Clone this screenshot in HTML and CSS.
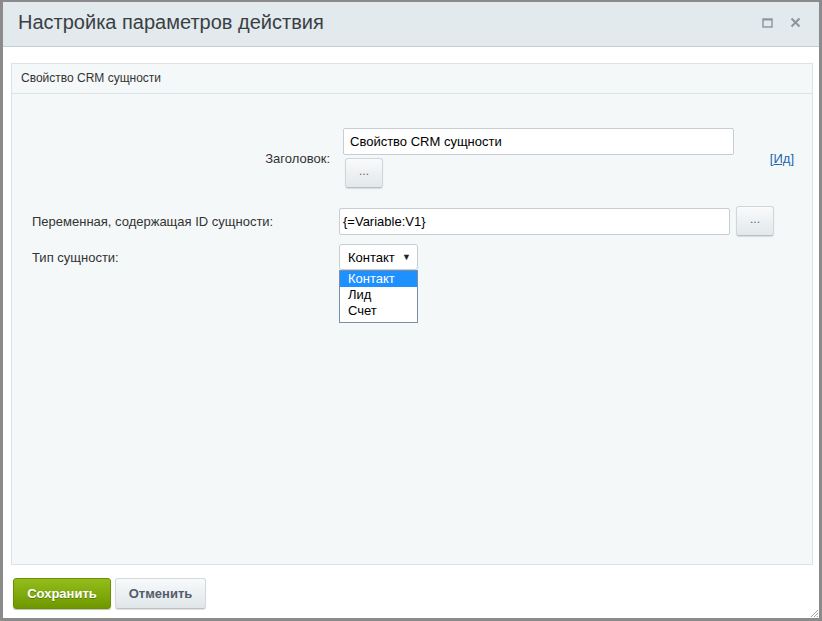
FILE: index.html
```html
<!DOCTYPE html>
<html lang="ru">
<head>
    <meta charset="UTF-8">
    <title>Настройка параметров действия</title>
    <link rel="stylesheet" href="styles.css">
</head>
<body>
    <div class="dialog">
        <div class="dialog-head">
            <span class="dialog-title">Настройка параметров действия</span>
            <span class="head-icons">
                <svg width="11" height="10" viewBox="0 0 11 10"><rect x="1" y="1" width="9" height="8" fill="none" stroke="#8a949c" stroke-width="1.4"/><line x1="1" y1="1.8" x2="10" y2="1.8" stroke="#8a949c" stroke-width="1.4"/></svg>
                <svg width="11" height="11" viewBox="0 0 11 11"><path d="M1.5 1.5 L9.5 9.5 M9.5 1.5 L1.5 9.5" stroke="#8a949c" stroke-width="2"/></svg>
            </span>
        </div>

        <div class="dialog-body">
            <div class="panel">
                <div class="panel-title">Свойство CRM сущности</div>
                <div class="panel-content">
                    <div class="row-title">
                        <div class="title-label">Заголовок:</div>
                        <div class="title-field">
                            <input class="field field-title" type="text" value="Свойство CRM сущности">
                            <button class="dots-btn dots-under">...</button>
                        </div>
                        <a class="id-link" href="#">[<u>Ид</u>]</a>
                    </div>

                    <div class="row">
                        <div class="row-label">Переменная, содержащая ID сущности:</div>
                        <input class="field field-var" type="text" value="{=Variable:V1}">
                        <button class="dots-btn dots-side">...</button>
                    </div>

                    <div class="row">
                        <div class="row-label">Тип сущности:</div>
                        <div class="select-wrap">
                            <div class="select-box">
                                <span>Контакт</span>
                                <span class="select-arrow">&#9660;</span>
                            </div>
                            <ul class="select-list">
                                <li class="selected">Контакт</li>
                                <li>Лид</li>
                                <li>Счет</li>
                            </ul>
                        </div>
                    </div>
                </div>
            </div>

            <div class="buttons">
                <button class="btn btn-save">Сохранить</button>
                <button class="btn btn-cancel">Отменить</button>
            </div>
        </div>

        <svg class="grip" width="9" height="9" viewBox="0 0 9 9">
            <path d="M8 1 L1 8 M8 4 L4 8 M8 7 L7 8" stroke="#a5a5a5" stroke-width="1"/>
        </svg>
    </div>
</body>
</html>
```

FILE: styles.css
```css
body {
    margin: 0;
    font-family: 'Liberation Sans', Arial, sans-serif;
    color: #333;
}

.dialog {
    position: relative;
    width: 822px;
    height: 621px;
    box-sizing: border-box;
    border: 3px solid #8b8b8b;
    border-top-width: 2px;
    background-color: #ffffff;
    display: flex;
    flex-direction: column;
}

.dialog-head {
    height: 44px;
    background-color: #e2eaed;
    border-bottom: 1px solid #c4cdd1;
    display: flex;
    align-items: center;
    justify-content: space-between;
    padding: 0 18px 0 15px;
}

.dialog-title {
    font-size: 20px;
    color: #3a3f44;
    margin-top: -4px;
}

.head-icons {
    display: flex;
    align-items: center;
    gap: 17px;
    margin-top: -3px;
}

.dialog-body {
    flex: 1;
    padding: 16px 6px 0 8px;
    display: flex;
    flex-direction: column;
}

.panel {
    height: 500px;
    border: 1px solid #dae4e8;
    background-color: #f5f8f9;
    position: relative;
}

.panel-title {
    height: 29px;
    line-height: 28px;
    padding-left: 9px;
    font-size: 12px;
    color: #333;
    border-bottom: 1px solid #dae4e8;
}

.panel-content {
    padding-top: 34px;
    font-size: 13px;
}

.row-title {
    display: flex;
    align-items: center;
}

.title-label {
    width: 318px;
    text-align: right;
    color: #333;
}

.title-field {
    margin-left: 13px;
    display: flex;
    flex-direction: column;
    align-items: flex-start;
}

.id-link {
    margin-left: auto;
    margin-right: 18px;
    color: #2067b0;
    text-decoration: none;
    font-size: 13px;
}

.field {
    box-sizing: border-box;
    height: 27px;
    border: 1px solid #c6cdd3;
    border-radius: 2px;
    background: #ffffff;
    font-family: 'Liberation Sans', Arial, sans-serif;
    font-size: 13px;
    color: #000;
    padding: 0 6px;
    outline: none;
}

.field-title {
    width: 391px;
}

.field-var {
    width: 391px;
    padding: 0 3px;
}

.dots-btn {
    box-sizing: border-box;
    width: 38px;
    height: 30px;
    border: 1px solid #d0d6da;
    border-bottom-color: #b8c0c5;
    border-radius: 3px;
    background: linear-gradient(#f9fafb, #e3e8eb);
    box-shadow: 0 1px 1px rgba(0, 0, 0, 0.12);
    font-size: 12px;
    color: #666;
    padding: 0 0 4px;
    font-family: 'Liberation Sans', Arial, sans-serif;
}

.dots-under {
    margin: 3px 0 0 2px;
}

.dots-side {
    margin-left: 6px;
}

.row {
    display: flex;
    align-items: center;
    margin-top: 18px;
}

.row + .row {
    margin-top: 8px;
}

.row-label {
    box-sizing: border-box;
    width: 327px;
    padding-left: 20px;
    color: #333;
}

.select-wrap {
    position: relative;
}

.select-box {
    box-sizing: border-box;
    width: 79px;
    height: 26px;
    border: 1px solid #c6cdd3;
    border-radius: 3px;
    background: #ffffff;
    display: flex;
    align-items: center;
    justify-content: space-between;
    padding: 0 6px 0 8px;
    color: #000;
}

.select-arrow {
    font-size: 9px;
    color: #222;
}

.select-list {
    position: absolute;
    top: 26px;
    left: 0;
    width: 79px;
    box-sizing: border-box;
    margin: 0;
    padding: 0 0 3px;
    list-style: none;
    background: #ffffff;
    border: 1px solid #7a8ea4;
    z-index: 5;
}

.select-list li {
    height: 16px;
    line-height: 16px;
    padding-left: 8px;
    color: #000;
}

.select-list li.selected {
    background-color: #1e90ff;
    color: #ffffff;
}

.buttons {
    display: flex;
    gap: 4px;
    margin-top: 13px;
    padding-left: 2px;
}

.btn {
    height: 31px;
    border-radius: 3px;
    font-family: 'Liberation Sans', Arial, sans-serif;
    font-size: 13px;
    font-weight: bold;
    padding: 0;
}

.btn-save {
    width: 98px;
    color: #ffffff;
    border: 1px solid #6a9000;
    background: linear-gradient(#93bd1b, #6f9800);
    text-shadow: 0 1px 0 rgba(0, 0, 0, 0.3);
    box-shadow: 0 1px 1px rgba(0, 0, 0, 0.25);
}

.btn-cancel {
    width: 91px;
    color: #535c69;
    border: 1px solid #d3d9dd;
    border-bottom-color: #b9c1c6;
    background: linear-gradient(#f8fafb, #e0e6e9);
    box-shadow: 0 1px 1px rgba(0, 0, 0, 0.12);
}

.grip {
    position: absolute;
    right: 0;
    bottom: 0;
}
```
